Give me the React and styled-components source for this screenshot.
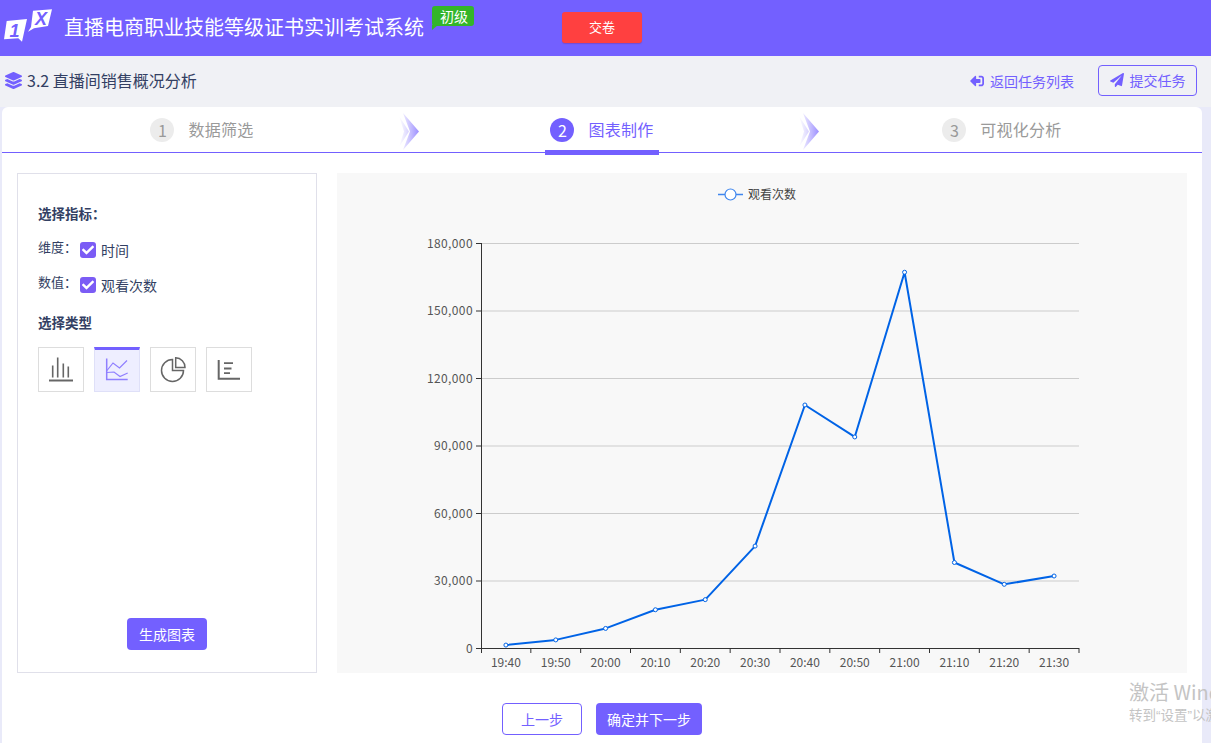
import React from 'react';
import styled, { createGlobalStyle } from 'styled-components';
import { FaLayerGroup, FaPaperPlane, FaSignOutAlt, FaCheck } from 'react-icons/fa';

const PURPLE = '#7360ff';
const LINE = '#0063e6';
const FONT = '"Noto Sans CJK SC", "Noto Sans", sans-serif';

const Global = createGlobalStyle`
  html, body { margin: 0; padding: 0; height: 100%; overflow: hidden; }
  body { background: #f0f1f5; font-family: ${FONT}; color: #2f3a5c; }
  * { box-sizing: border-box; }
`;

const Page = styled.div`
  width: 1211px;
  height: 743px;
  display: flex;
  flex-direction: column;
  overflow: hidden;
  position: relative;
`;

const Header = styled.header`
  height: 56px;
  flex: none;
  background: ${PURPLE};
  display: flex;
  align-items: flex-start;
`;

const LogoSvg = styled.svg`
  width: 54px;
  height: 44px;
  flex: none;
`;

const Title = styled.h1`
  margin: 14px 0 0 10px;
  font-size: 20px;
  line-height: 26px;
  font-weight: 400;
  color: #fff;
  white-space: nowrap;
`;

const Tag = styled.span`
  margin: 6px 0 0 8px;
  width: 42px;
  height: 20px;
  padding-left: 2px;
  background: #33b52a;
  color: #fff;
  font-size: 14px;
  line-height: 20px;
  text-align: center;
  border-radius: 3px;
  position: relative;
  &::after {
    content: '';
    position: absolute;
    left: 0;
    top: 19px;
    border-top: 5px solid #33b52a;
    border-left: 0 solid transparent;
    border-right: 6px solid transparent;
  }
`;

const HandIn = styled.button`
  margin: 12px 0 0 88px;
  width: 80px;
  height: 31px;
  border: 0;
  border-radius: 3px;
  background: #ff4040;
  box-shadow: 0 1px 1px rgba(120, 40, 120, 0.35);
  color: #fff;
  font: 400 13px ${FONT};
  padding: 0 0 2px;
`;

const SubBar = styled.div`
  height: 51px;
  flex: none;
  display: flex;
  align-items: center;
  padding: 0 14px 2px 5px;
`;

const Crumb = styled.div`
  display: flex;
  align-items: center;
  gap: 5px;
  font-size: 16px;
  line-height: 22px;
  color: #333f63;
  margin-top: -1px;
  svg { color: ${PURPLE}; font-size: 17px; }
`;

const BackLink = styled.a`
  margin-left: auto;
  display: flex;
  align-items: center;
  gap: 6px;
  color: ${PURPLE};
  font-size: 14px;
  svg { transform: scaleX(-1); font-size: 14px; }
`;

const Submit = styled.button`
  margin-left: 24px;
  width: 99px;
  height: 31px;
  border: 1px solid ${PURPLE};
  border-radius: 4px;
  background: transparent;
  color: ${PURPLE};
  font: 400 14px ${FONT};
  display: flex;
  align-items: center;
  justify-content: center;
  gap: 6px;
  padding: 0 0 1px;
`;

const CardWrap = styled.div`
  flex: 1;
  min-height: 0;
  background: #e9eaf9;
  padding: 0 9px 0 2px;
`;

const Card = styled.main`
  height: 100%;
  background: #fff;
  border-radius: 6px 6px 0 0;
  display: flex;
  flex-direction: column;
`;

const Steps = styled.nav`
  height: 46px;
  flex: none;
  display: grid;
  grid-template-columns: repeat(3, 400px);
  border-bottom: 1px solid ${PURPLE};
`;

const Step = styled.div`
  position: relative;
  display: flex;
  justify-content: center;
`;

const StepInner = styled.div`
  height: 48px;
  display: flex;
  align-items: flex-start;
  gap: 14px;
  padding: 11px 5px 0;
  border-bottom: ${p => (p.$active ? `5px solid ${PURPLE}` : '5px solid transparent')};
  position: relative;
  z-index: 1;
`;

const StepNum = styled.span`
  width: 24px;
  height: 24px;
  border-radius: 50%;
  background: ${p => (p.$active ? PURPLE : '#ececec')};
  color: ${p => (p.$active ? '#fff' : '#999')};
  font-size: 16px;
  line-height: 24px;
  text-align: center;
`;

const StepLabel = styled.span`
  font-size: 16px;
  line-height: 22px;
  letter-spacing: 0.25px;
  color: ${p => (p.$active ? PURPLE : '#9a9a9a')};
`;

const Chevron = styled.svg`
  position: absolute;
  right: -17px;
  top: 6px;
  width: 20px;
  height: 38px;
`;

const Workspace = styled.section`
  height: 500px;
  flex: none;
  margin-top: 20px;
  padding: 0 15px;
  display: flex;
  gap: 20px;
`;

const Panel = styled.aside`
  width: 300px;
  flex: none;
  border: 1px solid #e0e0ea;
  display: flex;
  flex-direction: column;
  padding: 30px 20px 22px;
`;

const PanelHead = styled.div`
  font-size: 13.5px;
  line-height: 18px;
  font-weight: 700;
  color: #333f63;
  margin-top: ${p => p.$mt || 0}px;
  margin-bottom: ${p => p.$mb}px;
`;

const FieldRow = styled.div`
  display: flex;
  align-items: flex-start;
  gap: 3px;
  height: 35px;
`;

const FieldName = styled.span`
  font-size: 13px;
  line-height: 18px;
  width: 39px;
  white-space: nowrap;
  color: #333f63;
`;

const CheckLabel = styled.label`
  display: flex;
  align-items: center;
  gap: 5px;
  font-size: 14px;
  line-height: 16px;
  margin-top: 4px;
  color: #333f63;
`;

const CheckBox = styled.span`
  width: 16px;
  height: 16px;
  border-radius: 3px;
  background: #7b5cf5;
  color: #fff;
  display: flex;
  align-items: center;
  justify-content: center;
  font-size: 12px;
`;

const Types = styled.div`
  display: flex;
  gap: 10px;
`;

const TypeTile = styled.div`
  width: 46px;
  height: 45px;
  border: 1px solid ${p => (p.$active ? '#dfe0f8' : '#ddd')};
  border-top: ${p => (p.$active ? `3px solid ${PURPLE}` : '1px solid #ddd')};
  background: ${p => (p.$active ? '#eeeeff' : '#fff')};
  color: ${p => (p.$active ? '#8f7fff' : '#666')};
  display: flex;
  align-items: center;
  justify-content: center;
  svg { width: 26px; height: 26px; }
`;

const Generate = styled.button`
  margin: auto auto 0;
  width: 80px;
  height: 32px;
  border: 0;
  border-radius: 4px;
  background: ${PURPLE};
  color: #fff;
  font: 400 14px ${FONT};
  padding: 0;
`;

const ChartBox = styled.div`
  width: 850px;
  height: 500px;
  background: #f8f8f8;
  flex: none;
`;

const ChartSvg = styled.svg`
  display: block;
  font-family: ${FONT};
`;

const Footer = styled.div`
  margin-top: 30px;
  padding-left: 500px;
  display: flex;
  gap: 14px;
`;

const Prev = styled.button`
  width: 80px;
  height: 32px;
  border: 1px solid ${PURPLE};
  border-radius: 4px;
  background: #fff;
  color: ${PURPLE};
  font: 400 14px ${FONT};
  padding: 0;
`;

const Next = styled.button`
  width: 106px;
  height: 32px;
  border: 0;
  border-radius: 4px;
  background: ${PURPLE};
  color: #fff;
  font: 400 14px ${FONT};
  padding: 0;
`;

const Watermark = styled.div`
  position: absolute;
  left: 1129px;
  top: 678px;
  width: 82px;
  overflow: hidden;
  white-space: nowrap;
  color: #c4c4c4;
`;

const WmTop = styled.div`
  font-size: 20px;
  line-height: 28px;
`;

const WmSub = styled.div`
  font-family: "Liberation Sans", ${FONT};
  font-size: 13.5px;
  line-height: 20px;
`;

const Logo = () => (
  <LogoSvg viewBox="0 0 54 44">
    <polygon points="6.700,21 27,19 22,41.700 18.300,38.300 4,39.300" fill="#fff" />
    <text x="9.500" y="36.500" fontFamily="Liberation Sans" fontSize="18" fontWeight="700" fontStyle="italic" fill={PURPLE}>1</text>
    <polygon points="33,10.700 52,9.300 48,26 34,28.300 28,31.700 31,27" fill="#fff" />
    <text x="35" y="25" fontFamily="Liberation Sans" fontSize="18" fontWeight="700" fontStyle="italic" fill={PURPLE}>X</text>
  </LogoSvg>
);

const ChevronIcon = ({ id }) => (
  <Chevron viewBox="0 0 20 38">
    <defs>
      <linearGradient id={id} gradientUnits="userSpaceOnUse" x1="0" x2="20" y1="0" y2="0">
        <stop offset="0" stopColor={PURPLE} stopOpacity="0" />
        <stop offset="1" stopColor={PURPLE} stopOpacity="0.7" />
      </linearGradient>
    </defs>
    <polygon points="0,3 10,18.500 0,34 5,18.500" fill={`url(#${id})`} opacity="0.8" />
    <polygon points="4,0 20,18.500 4,37 11,18.500" fill={`url(#${id})`} />
  </Chevron>
);

const BarIcon = () => (
  <svg viewBox="0 0 26 26" fill="none" stroke="currentColor">
    <path d="M1 23.500h24" strokeWidth="2" />
    <path d="M4.700 20.500V8.500M9.700 20.500V.5M15.300 20.500V6.500M20.300 20.500V9.500" strokeWidth="1.600" />
  </svg>
);
const LineIcon = () => (
  <svg viewBox="0 0 26 26" fill="none" stroke="currentColor" strokeWidth="1.200">
    <path d="M2.700 .5v21h21" strokeWidth="1.500" />
    <path d="M3 12.500 9 5l6.500 5L23 2.500" />
    <path d="M3 14.500 10 14l6 4.500 7.700-3.500" />
  </svg>
);
const PieIcon = () => (
  <svg viewBox="0 0 26 26" fill="none" stroke="currentColor" strokeWidth="1.500">
    <path d="M12.500 2.500a11 11 0 1 0 11 11h-11z" />
    <path d="M15.700 .8v9.700h9.300A9.500 9.500 0 0 0 15.700 .8z" />
  </svg>
);
const HBarIcon = () => (
  <svg viewBox="0 0 26 26" fill="none" stroke="currentColor">
    <path d="M2.700 3v18.800H24" strokeWidth="2" />
    <path d="M8 6.200h9M8 11.500h7.500M8 16.200h6" strokeWidth="1.800" />
  </svg>
);

const X0 = 144, X1 = 742, Y0 = 475, YTOP = 70;
const labels = ['19:40','19:50','20:00','20:10','20:20','20:30','20:40','20:50','21:00','21:10','21:20','21:30'];
const values = [1300, 3600, 8700, 17000, 21500, 45300, 108000, 93800, 167000, 38000, 28300, 32000];
const ticks = [0, 30000, 60000, 90000, 120000, 150000, 180000];
const yOf = v => Y0 - (v / 180000) * (Y0 - YTOP);
const band = (X1 - X0) / 12;
const xOf = i => X0 + band * (i + 0.5);

const Chart = () => (
  <ChartSvg width="850" height="500" viewBox="0 0 850 500">
    <line x1="381" x2="406" y1="21.500" y2="21.500" stroke="#3f86ee" strokeWidth="1.500" />
    <circle cx="393.500" cy="21.500" r="5.500" fill="#fff" stroke="#3f86ee" strokeWidth="1.200" />
    <text x="411" y="26" fontSize="12" fill="#444">观看次数</text>
    {ticks.map(t => (
      <g key={t}>
        {t > 0 && <line x1={X0} x2={X1} y1={yOf(t) + 0.5} y2={yOf(t) + 0.5} stroke="#ccc" />}
        <line x1={X0 - 5} x2={X0} y1={yOf(t) + 0.5} y2={yOf(t) + 0.5} stroke="#333" />
        <text x={X0 - 8} y={yOf(t) + 4.500} fontSize="12" fill="#555" textAnchor="end" letterSpacing="0.4">{t.toLocaleString('en-US')}</text>
      </g>
    ))}
    <line x1={X0 + 0.5} x2={X0 + 0.5} y1={YTOP} y2={Y0 + 5} stroke="#333" />
    <line x1={X0} x2={X1} y1={Y0 + 0.5} y2={Y0 + 0.5} stroke="#333" />
    {labels.map((l, i) => (
      <g key={l}>
        <line x1={X0 + band * (i + 1)} x2={X0 + band * (i + 1)} y1={Y0} y2={Y0 + 5} stroke="#333" />
        <text x={xOf(i)} y={Y0 + 19} fontSize="12" fill="#555" textAnchor="middle">{l}</text>
      </g>
    ))}
    <polyline
      points={values.map((v, i) => `${xOf(i)},${yOf(v)}`).join(' ')}
      fill="none"
      stroke={LINE}
      strokeWidth="2"
      strokeLinejoin="round"
    />
    {values.map((v, i) => (
      <circle key={i} cx={xOf(i)} cy={yOf(v)} r="2" fill="#fff" stroke={LINE} strokeWidth="1" />
    ))}
  </ChartSvg>
);

const steps = [
  { n: 1, label: '数据筛选' },
  { n: 2, label: '图表制作', active: true },
  { n: 3, label: '可视化分析' },
];

export default function App() {
  return (
    <Page>
      <Global />
      <Header>
        <Logo />
        <Title>直播电商职业技能等级证书实训考试系统</Title>
        <Tag>初级</Tag>
        <HandIn>交卷</HandIn>
      </Header>
      <SubBar>
        <Crumb><FaLayerGroup />3.2 直播间销售概况分析</Crumb>
        <BackLink><FaSignOutAlt />返回任务列表</BackLink>
        <Submit><FaPaperPlane />提交任务</Submit>
      </SubBar>
      <CardWrap>
        <Card>
          <Steps>
            {steps.map((s, i) => (
              <Step key={s.n}>
                <StepInner $active={s.active}>
                  <StepNum $active={s.active}>{s.n}</StepNum>
                  <StepLabel $active={s.active}>{s.label}</StepLabel>
                </StepInner>
                {i < 2 && <ChevronIcon id={`chev${i}`} />}
              </Step>
            ))}
          </Steps>
          <Workspace>
            <Panel>
              <PanelHead $mb={16}>选择指标：</PanelHead>
              <FieldRow>
                <FieldName>维度：</FieldName>
                <CheckLabel><CheckBox><FaCheck /></CheckBox>时间</CheckLabel>
              </FieldRow>
              <FieldRow>
                <FieldName>数值：</FieldName>
                <CheckLabel><CheckBox><FaCheck /></CheckBox>观看次数</CheckLabel>
              </FieldRow>
              <PanelHead $mt={5} $mb={16}>选择类型</PanelHead>
              <Types>
                <TypeTile><BarIcon /></TypeTile>
                <TypeTile $active><LineIcon /></TypeTile>
                <TypeTile><PieIcon /></TypeTile>
                <TypeTile><HBarIcon /></TypeTile>
              </Types>
              <Generate>生成图表</Generate>
            </Panel>
            <ChartBox><Chart /></ChartBox>
          </Workspace>
          <Footer>
            <Prev>上一步</Prev>
            <Next>确定并下一步</Next>
          </Footer>
        </Card>
      </CardWrap>
      <Watermark>
        <WmTop>激活 Windows</WmTop>
        <WmSub>转到“设置”以激活 Windows</WmSub>
      </Watermark>
    </Page>
  );
}
